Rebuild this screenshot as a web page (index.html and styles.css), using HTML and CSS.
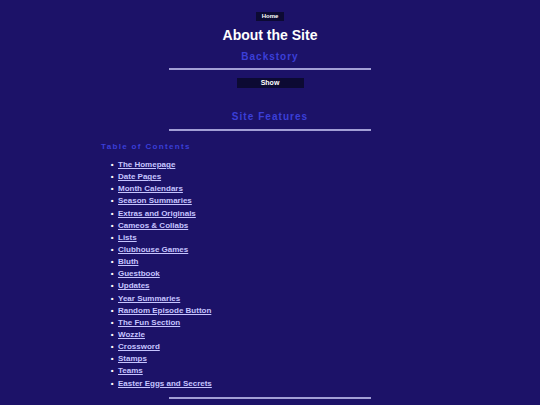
FILE: index.html
```html
<!DOCTYPE html>
<html>
<head>
<meta charset="utf-8">
<link rel="stylesheet" href="styles.css">
</head>
<body>
<div class="page">
  <div class="top">
    <a class="home-btn" href="#">Home</a>
  </div>
  <h1 class="title">About the Site</h1>
  <h2 class="section">Backstory</h2>
  <hr class="rule">
  <div class="show-row"><button class="show-btn">Show</button></div>
  <h2 class="section features">Site Features</h2>
  <hr class="rule">
  <div class="toc">
    <h3 class="toc-title">Table of Contents</h3>
    <ul class="toc-list">
      <li><a href="#">The Homepage</a></li>
      <li><a href="#">Date Pages</a></li>
      <li><a href="#">Month Calendars</a></li>
      <li><a href="#">Season Summaries</a></li>
      <li><a href="#">Extras and Originals</a></li>
      <li><a href="#">Cameos &amp; Collabs</a></li>
      <li><a href="#">Lists</a></li>
      <li><a href="#">Clubhouse Games</a></li>
      <li><a href="#">Bluth</a></li>
      <li><a href="#">Guestbook</a></li>
      <li><a href="#">Updates</a></li>
      <li><a href="#">Year Summaries</a></li>
      <li><a href="#">Random Episode Button</a></li>
      <li><a href="#">The Fun Section</a></li>
      <li><a href="#">Wozzle</a></li>
      <li><a href="#">Crossword</a></li>
      <li><a href="#">Stamps</a></li>
      <li><a href="#">Teams</a></li>
      <li><a href="#">Easter Eggs and Secrets</a></li>
    </ul>
  </div>
  <hr class="rule">
</div>
</body>
</html>
```

FILE: styles.css
```css
html, body {
  margin: 0;
  padding: 0;
  background: #1c1268;
  font-family: "Liberation Sans", Arial, sans-serif;
  height: 405px;
  overflow: hidden;
}
.page {
  display: flex;
  flex-direction: column;
  align-items: center;
  padding-top: 12px;
}
.top {
  display: flex;
  justify-content: center;
}
.home-btn {
  display: block;
  width: 28px;
  height: 9px;
  line-height: 9px;
  background: #0c0a33;
  color: #ffffff;
  font-size: 6px;
  font-weight: bold;
  text-align: center;
  text-decoration: none;
}
.title {
  margin: 0;
  margin-top: 5px;
  height: 18px;
  line-height: 18px;
  font-size: 14px;
  font-weight: bold;
  color: #ffffff;
}
.section {
  margin: 0;
  margin-top: 6px;
  height: 14px;
  line-height: 14px;
  font-size: 10px;
  font-weight: bold;
  letter-spacing: 1px;
  color: #3b3fd8;
}
.features {
  margin-top: 22px;
  letter-spacing: 1.05px;
}
.rule {
  width: 202px;
  height: 2px;
  margin: 4px 0 0 0;
  border: 0;
  background: #a29fd6;
}
.features + .rule {
  margin-top: 5px;
}
.show-row {
  margin-top: 8px;
}
.show-btn {
  display: block;
  width: 67px;
  height: 10px;
  padding: 0;
  border: 0;
  background: #0c0a33;
  color: #ffffff;
  font-family: "Liberation Sans", Arial, sans-serif;
  font-size: 7px;
  font-weight: bold;
  line-height: 10px;
}
.toc {
  align-self: stretch;
  padding-left: 101px;
  margin-top: 10px;
}
.toc-title {
  margin: 0;
  height: 12px;
  line-height: 12px;
  font-size: 8px;
  font-weight: bold;
  letter-spacing: 1.35px;
  color: #3b3fd8;
}
.toc-list {
  margin: 6px 0 0 0;
  padding-left: 17px;
  list-style: disc;
  color: #ffffff;
}
.toc-list li {
  height: 12.15px;
  line-height: 12.15px;
  font-size: 8px;
  font-weight: bold;
}
.toc-list li::marker {
  content: "\2022\00a0\00a0";
  font-size: 8px;
}
.toc-list a {
  color: #c6c4ff;
  text-decoration: underline;
}
.toc + .rule {
  margin-top: 7px;
}
```
